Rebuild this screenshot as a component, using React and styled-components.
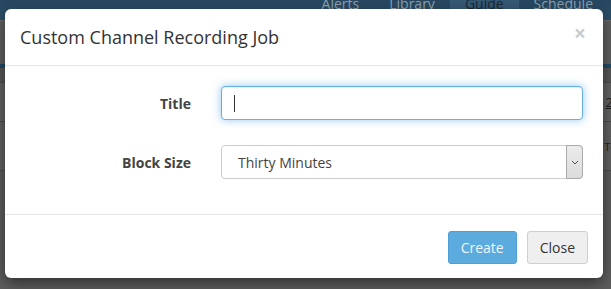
import React from 'react';
import styled, { createGlobalStyle } from 'styled-components';

const GlobalStyle = createGlobalStyle`
    html, body {
        margin: 0;
        padding: 0;
        background: #5e5e5e;
        font-family: "Open Sans", "Liberation Sans", sans-serif;
        overflow: hidden;
    }
`;

// dimmed application behind the dialog
const Page = styled.div`
    position: relative;
    width: 611px;
    height: 289px;
    overflow: hidden;
    background: #5e5e5e;
`;

const NavBar = styled.div`
    height: 20px;
    background: linear-gradient(#274760, #2e516b);
    display: flex;
    justify-content: flex-end;
    align-items: flex-start;
    padding-right: 3px;
    overflow: hidden;
`;

const NavItem = styled.div`
    margin-top: -11px;
    padding: 0 15px;
    height: 31px;
    line-height: 30px;
    font-size: 14px;
    color: ${p => (p.active ? '#1a2836' : '#8ea3b4')};
    background: ${p => (p.active ? '#365a74' : 'transparent')};
`;

const Toolbar = styled.div`
    height: 43px;
    background: #606060;
    border-top: 1px solid #6a6a6a;
`;

const Stripe = styled.div`
    height: 4px;
    background: #234b68;
`;

const Row = styled.div`
    height: ${p => p.h}px;
    border-bottom: 1px solid #4e4e4e;
    background: ${p => p.bg};
    display: flex;
    justify-content: flex-end;
    align-items: center;
    font-size: 12px;
    color: #222;
    white-space: nowrap;
`;

const RowText = styled.span`
    margin-right: -6px;
    text-decoration: ${p => (p.underline ? 'underline' : 'none')};
    font-size: ${p => p.size}px;
`;

// dialog
const Modal = styled.div`
    position: absolute;
    left: 5px;
    top: 9px;
    width: 598px;
    background: #fff;
    border-radius: 6px;
    box-shadow: 0 5px 15px rgba(0, 0, 0, 0.5);
    color: #333;
`;

const Header = styled.div`
    display: flex;
    align-items: center;
    justify-content: space-between;
    padding: 15px;
    border-bottom: 1px solid #e5e5e5;
`;

const Title = styled.h4`
    margin: 0;
    font-size: 18px;
    font-weight: 400;
    line-height: 26px;
    color: #333;
`;

const CloseX = styled.span`
    font-size: 21px;
    font-weight: 700;
    line-height: 1;
    color: #000;
    opacity: 0.2;
    margin-top: -8px;
    margin-right: 2px;
`;

const Body = styled.div`
    padding: 20px 20px 15px 20px;
`;

const FormRow = styled.div`
    display: grid;
    grid-template-columns: 166px 1fr;
    column-gap: 30px;
    align-items: center;
    margin-bottom: ${p => (p.last ? 20 : 25)}px;
`;

const Label = styled.label`
    text-align: right;
    font-size: 14px;
    font-weight: 700;
    color: #444;
`;

const Field = styled.div`
    position: relative;
    height: 34px;
`;

const Input = styled.input`
    box-sizing: border-box;
    width: 100%;
    height: 34px;
    border: 1px solid #66afe9;
    border-radius: 4px;
    outline: none;
    padding: 6px 12px;
    font: inherit;
    font-size: 14px;
    caret-color: transparent;
    box-shadow: inset 0 1px 1px rgba(0, 0, 0, 0.075), 0 0 9px rgba(102, 175, 233, 0.7);
`;

const Caret = styled.span`
    position: absolute;
    left: 13px;
    top: 9px;
    width: 1px;
    height: 17px;
    background: #333;
`;

const Select = styled.select`
    box-sizing: border-box;
    width: 100%;
    height: 34px;
    border: 1px solid #ccc;
    border-radius: 4px;
    outline: none;
    padding: 0 30px 0 16px;
    font: inherit;
    font-size: 14px;
    color: #444;
    background: #fff;
    appearance: none;
    -webkit-appearance: none;
`;

const ArrowBox = styled.span`
    position: absolute;
    right: 0;
    top: 0;
    width: 17px;
    height: 34px;
    box-sizing: border-box;
    border: 1px solid #aaa;
    border-radius: 0 4px 4px 0;
    background: linear-gradient(#ececec, #dcdcdc);
    display: flex;
    align-items: center;
    justify-content: center;
    pointer-events: none;
`;

const Footer = styled.div`
    display: flex;
    justify-content: flex-end;
    gap: 10px;
    padding: 16px 15px 14px;
    border-top: 1px solid #e5e5e5;
`;

const Button = styled.button`
    height: 33px;
    padding: 0 12px;
    font: inherit;
    font-size: 14px;
    border-radius: 3px;
    border: 1px solid ${p => (p.primary ? '#4f9fd6' : '#cfcfcf')};
    background: ${p => (p.primary ? '#5cabdf' : '#efefef')};
    color: ${p => (p.primary ? '#eef6fc' : '#333')};
`;

export default function App() {
    return (
        <>
            <GlobalStyle />
            <Page>
                <NavBar>
                    <NavItem>Alerts</NavItem>
                    <NavItem>Library</NavItem>
                    <NavItem active>Guide</NavItem>
                    <NavItem>Schedule</NavItem>
                </NavBar>
                <Toolbar />
                <Stripe />
                <Row h={14} bg="#585858" />
                <Row h={38} bg="#646464">
                    <RowText underline size={13}>2-</RowText>
                </Row>
                <Row h={48} bg="#626262">
                    <RowText size={11}>To</RowText>
                </Row>
                <Row h={120} bg="#5e5e5e" />

                <Modal>
                    <Header>
                        <Title>Custom Channel Recording Job</Title>
                        <CloseX>×</CloseX>
                    </Header>
                    <Body>
                        <FormRow>
                            <Label>Title</Label>
                            <Field>
                                <Input type="text" defaultValue="" />
                                <Caret />
                            </Field>
                        </FormRow>
                        <FormRow last>
                            <Label>Block Size</Label>
                            <Field>
                                <Select defaultValue="30">
                                    <option value="30">Thirty Minutes</option>
                                    <option value="60">One Hour</option>
                                </Select>
                                <ArrowBox>
                                    <svg width="8" height="5" viewBox="0 0 8 5">
                                        <path d="M1 1 L4 4 L7 1" fill="none" stroke="#555" strokeWidth="1" />
                                    </svg>
                                </ArrowBox>
                            </Field>
                        </FormRow>
                    </Body>
                    <Footer>
                        <Button primary>Create</Button>
                        <Button>Close</Button>
                    </Footer>
                </Modal>
            </Page>
        </>
    );
}
